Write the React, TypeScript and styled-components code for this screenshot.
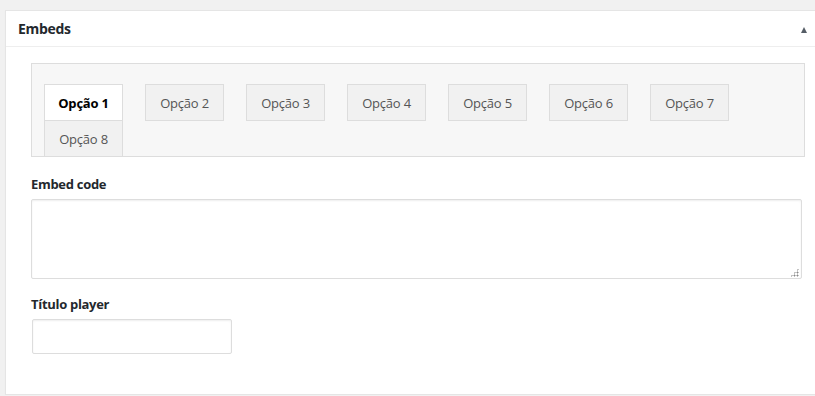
import React from 'react'
import styled, { createGlobalStyle } from 'styled-components'

const GlobalStyle = createGlobalStyle`
  html, body {
    margin: 0;
    padding: 0;
    overflow: hidden;
    background: #f1f1f1;
  }
  body {
    font-family: "Open Sans", "Noto Sans", "Liberation Sans", sans-serif;
    font-size: 13px;
    color: #444;
  }
`

const Page = styled.div`
  padding: 10px 0 0 5px;
`

const Panel = styled.section`
  width: 820px;
  background: #fff;
  border: 1px solid #e5e5e5;
  box-shadow: 0 1px 1px rgba(0, 0, 0, 0.04);
`

const PanelHeader = styled.header`
  display: flex;
  align-items: center;
  justify-content: space-between;
  height: 35px;
  padding: 0 12px 0 12px;
  border-bottom: 1px solid #eee;
`

const PanelTitle = styled.h2`
  margin: 0;
  font-size: 14px;
  font-weight: 700;
  color: #23282d;
  letter-spacing: -0.3px;
`

const ToggleArrow = styled.span`
  width: 0;
  height: 0;
  margin-right: 7px;
  margin-top: 2px;
  border-left: 3.5px solid transparent;
  border-right: 3.5px solid transparent;
  border-bottom: 6px solid #555d66;
`

const PanelBody = styled.div`
  padding: 16px 21px 40px 25px;
`

const TabBox = styled.ul`
  display: flex;
  flex-wrap: wrap;
  column-gap: 22px;
  margin: 0;
  padding: 20px 12px 0;
  list-style: none;
  background: #f7f7f7;
  border: 1px solid #ddd;
`

const Tab = styled.li<{ $active?: boolean }>`
  box-sizing: border-box;
  display: flex;
  align-items: center;
  justify-content: center;
  width: 79px;
  height: 37px;
  margin-bottom: -1px;
  border: 1px solid #ddd;
  background: ${({ $active }) => ($active ? '#fff' : '#f1f1f1')};
  color: ${({ $active }) => ($active ? '#000' : '#555')};
  font-weight: ${({ $active }) => ($active ? 700 : 400)};
  letter-spacing: -0.2px;
  cursor: pointer;
`

const Field = styled.div`
  margin-top: 18px;

  & + & {
    margin-top: 16px;
  }
`

const Label = styled.label`
  display: block;
  margin-bottom: 5px;
  font-weight: 700;
  color: #23282d;
  line-height: 19px;
  letter-spacing: -0.3px;
`

const AreaWrap = styled.div`
  position: relative;
  width: 772px;
`

const TextArea = styled.textarea`
  display: block;
  box-sizing: border-box;
  width: 771px;
  height: 80px;
  margin: 0;
  padding: 2px 6px;
  border: 1px solid #ddd;
  border-radius: 2px;
  box-shadow: inset 0 1px 2px rgba(0, 0, 0, 0.07);
  background: #fff;
  resize: none;
  font: inherit;
  outline: none;
`

const Grip = styled.span`
  position: absolute;
  right: 4px;
  bottom: 2px;
  width: 9px;
  height: 9px;
  background-image: radial-gradient(circle, #888 0.9px, transparent 1.1px);
  background-size: 3px 3px;
  clip-path: polygon(100% 0, 100% 100%, 0 100%);
  pointer-events: none;
`

const TextInput = styled.input`
  display: block;
  box-sizing: border-box;
  width: 200px;
  height: 35px;
  margin: 0 0 0 1px;
  padding: 3px 6px;
  border: 1px solid #ddd;
  border-radius: 2px;
  box-shadow: inset 0 1px 2px rgba(0, 0, 0, 0.07);
  background: #fff;
  font: inherit;
  outline: none;
`

const options = ['Opção 1', 'Opção 2', 'Opção 3', 'Opção 4', 'Opção 5', 'Opção 6', 'Opção 7', 'Opção 8']

export default function App() {
  return (
    <Page>
      <GlobalStyle />
      <Panel>
        <PanelHeader>
          <PanelTitle>Embeds</PanelTitle>
          <ToggleArrow />
        </PanelHeader>
        <PanelBody>
          <TabBox>
            {options.map((o, i) => (
              <Tab key={o} $active={i === 0}>
                {o}
              </Tab>
            ))}
          </TabBox>
          <Field>
            <Label>Embed code</Label>
            <AreaWrap>
              <TextArea />
              <Grip />
            </AreaWrap>
          </Field>
          <Field>
            <Label>Título player</Label>
            <TextInput type="text" />
          </Field>
        </PanelBody>
      </Panel>
    </Page>
  )
}
